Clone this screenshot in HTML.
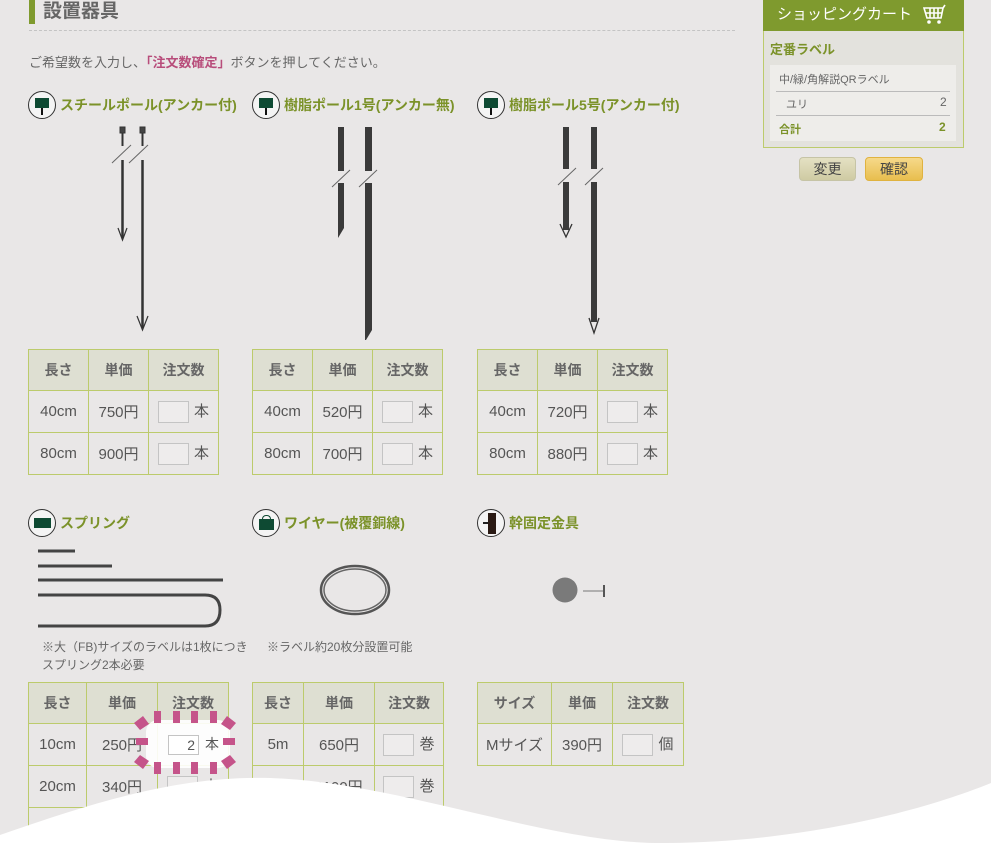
<!DOCTYPE html>
<html><head><meta charset="utf-8"><style>
*{margin:0;padding:0;box-sizing:border-box}
html,body{width:991px;height:845px;overflow:hidden;background:#e9e7e7}
body{position:relative;font-family:"Liberation Sans","Noto Sans CJK JP",sans-serif;color:#555}
.abs{position:absolute}
h1{position:absolute;left:29px;top:0;height:24px;border-left:6px solid #7f9a2e;padding-left:8px;font-size:19px;font-weight:bold;color:#666;line-height:24px}
.rule{position:absolute;left:29px;top:30px;width:706px;border-top:1px dashed #c4c4c4}
.lead{position:absolute;left:29px;top:52px;font-size:13px;color:#666}
.lead b{color:#b84d7b}
.ttl{position:absolute;font-size:14px;font-weight:bold;color:#7b9229;line-height:28px;white-space:nowrap}
.ttl .ic{display:inline-block;width:28px;height:28px;border:1.5px solid #333;border-radius:50%;vertical-align:top;margin-right:4px;position:relative;background:#f4f4f4}
table{position:absolute;border-collapse:collapse;table-layout:fixed}
td,th{border:1.5px solid #bccb6c;text-align:center;font-size:15px;color:#555;height:42px;padding:0}
th{background:#dedfd2;font-weight:bold;color:#666;height:41px;font-size:14px}
.in{display:inline-block;width:31px;height:22px;border:1px solid #c4c4c4;background:#eeecec;vertical-align:middle;margin-right:5px}
.note{position:absolute;font-size:12px;color:#666;line-height:18px}
</style></head><body>
<h1>設置器具</h1>
<div class="rule"></div>
<div class="lead">ご希望数を入力し、<b>「注文数確定」</b>ボタンを押してください。</div>

<div class="ttl" style="left:28px;top:91px"><span class="ic"><i class="abs" style="left:6px;top:6px;width:14px;height:10px;background:#0e4a33"></i><i class="abs" style="left:12px;top:16px;width:2px;height:7px;background:#111"></i></span>スチールポール(アンカー付)</div>
<div class="ttl" style="left:252px;top:91px"><span class="ic"><i class="abs" style="left:6px;top:6px;width:14px;height:10px;background:#0e4a33"></i><i class="abs" style="left:12px;top:16px;width:2px;height:7px;background:#111"></i></span>樹脂ポール1号(アンカー無)</div>
<div class="ttl" style="left:477px;top:91px"><span class="ic"><i class="abs" style="left:6px;top:6px;width:14px;height:10px;background:#0e4a33"></i><i class="abs" style="left:12px;top:16px;width:2px;height:7px;background:#111"></i></span>樹脂ポール5号(アンカー付)</div>

<svg class="abs" style="left:0;top:0" width="991" height="845">
<g stroke="#333" fill="none">
<rect x="120" y="127" width="5" height="6" fill="#444"/><line x1="122.5" y1="133" x2="122.5" y2="146" stroke-width="2"/>
<line x1="122.5" y1="160" x2="122.5" y2="238" stroke-width="2.5"/>
<path d="M118 228 L122.5 240 L127 228" stroke-width="1.2"/>
<rect x="140" y="127" width="5" height="6" fill="#444"/><line x1="142.5" y1="133" x2="142.5" y2="146" stroke-width="2"/>
<line x1="142.5" y1="160" x2="142.5" y2="328" stroke-width="2.5"/>
<path d="M137 316 L142.5 330 L148 316" stroke-width="1.2"/>
<line x1="112" y1="163" x2="131" y2="145" stroke="#666"/><line x1="129" y1="163" x2="148" y2="145" stroke="#666"/>
<path d="M338 127 h6 v44 h-6z M338 183 h6 v45 l-6 10z" fill="#3a3a3a" stroke="none"/>
<path d="M365 127 h7 v44 h-7z M365 183 h7 v147 l-6 10 h-1z" fill="#3a3a3a" stroke="none"/>
<line x1="332" y1="187" x2="350" y2="170" stroke="#666"/><line x1="359" y1="187" x2="377" y2="170" stroke="#666"/>
<path d="M563 127 h6 v42 h-6z M563 182 h6 v48 h-6z" fill="#3a3a3a" stroke="none"/>
<path d="M560 224 L566 237 L572 224" stroke-width="1.3"/>
<path d="M591 127 h6 v42 h-6z M591 182 h6 v140 h-6z" fill="#3a3a3a" stroke="none"/>
<path d="M589 318 L594 333 L599 318" stroke-width="1.3"/>
<line x1="558" y1="185" x2="576" y2="168" stroke="#666"/><line x1="585" y1="185" x2="603" y2="168" stroke="#666"/>
<line x1="38" y1="551" x2="75" y2="551" stroke="#444" stroke-width="3"/>
<line x1="38" y1="566" x2="112" y2="566" stroke="#444" stroke-width="3"/>
<line x1="38" y1="580" x2="223" y2="580" stroke="#444" stroke-width="3"/>
<path d="M38 595 H205 Q220 595 220 610 Q220 626 205 626 H38" stroke="#444" stroke-width="3"/>
<ellipse cx="355" cy="590" rx="34" ry="24" stroke="#555" stroke-width="2.5"/>
<ellipse cx="355" cy="590" rx="31" ry="21" stroke="#666" stroke-width="1.5"/>
<circle cx="565" cy="590" r="12.5" fill="#7a7a7a" stroke="none"/>
<line x1="583" y1="591" x2="603" y2="591" stroke="#777" stroke-width="1"/><line x1="604" y1="585" x2="604" y2="597" stroke="#555" stroke-width="2"/>
</g>
</svg>

<table style="left:28px;top:349px;width:190px"><col width="60"><col width="60"><col width="70">
<tr><th>長さ</th><th>単価</th><th>注文数</th></tr>
<tr><td>40cm</td><td>750円</td><td><span class="in"></span>本</td></tr>
<tr><td>80cm</td><td>900円</td><td><span class="in"></span>本</td></tr></table>
<table style="left:252px;top:349px;width:190px"><col width="60"><col width="60"><col width="70">
<tr><th>長さ</th><th>単価</th><th>注文数</th></tr>
<tr><td>40cm</td><td>520円</td><td><span class="in"></span>本</td></tr>
<tr><td>80cm</td><td>700円</td><td><span class="in"></span>本</td></tr></table>
<table style="left:477px;top:349px;width:190px"><col width="60"><col width="60"><col width="70">
<tr><th>長さ</th><th>単価</th><th>注文数</th></tr>
<tr><td>40cm</td><td>720円</td><td><span class="in"></span>本</td></tr>
<tr><td>80cm</td><td>880円</td><td><span class="in"></span>本</td></tr></table>

<div class="ttl" style="left:28px;top:509px"><span class="ic"><i class="abs" style="left:5px;top:8px;width:17px;height:10px;background:#0e4a33"></i></span>スプリング</div>
<div class="ttl" style="left:252px;top:509px"><span class="ic"><i class="abs" style="left:6px;top:9px;width:15px;height:11px;background:#0e4a33"></i><i class="abs" style="left:9px;top:5px;width:9px;height:5px;border:1.5px solid #0e4a33;border-bottom:none;border-radius:4px 4px 0 0"></i></span>ワイヤー(被覆銅線)</div>
<div class="ttl" style="left:477px;top:509px"><span class="ic"><i class="abs" style="left:10px;top:3px;width:8px;height:21px;background:#2a1a14"></i><i class="abs" style="left:5px;top:12px;width:5px;height:2px;background:#222"></i></span>幹固定金具</div>

<div class="note" style="left:42px;top:638px">※大（FB)サイズのラベルは1枚につき<br>スプリング2本必要</div>
<div class="note" style="left:267px;top:638px">※ラベル約20枚分設置可能</div>

<table style="left:28px;top:682px;width:200px"><col width="58"><col width="71"><col width="71">
<tr><th>長さ</th><th>単価</th><th>注文数</th></tr>
<tr><td>10cm</td><td>250円</td><td></td></tr>
<tr><td>20cm</td><td>340円</td><td><span class="in"></span>本</td></tr>
<tr><td>&nbsp;</td><td></td><td></td></tr></table>
<table style="left:252px;top:682px;width:191px"><col width="51"><col width="71"><col width="69">
<tr><th>長さ</th><th>単価</th><th>注文数</th></tr>
<tr><td>5m</td><td>650円</td><td><span class="in"></span>巻</td></tr>
<tr><td>10m</td><td>1100円</td><td><span class="in"></span>巻</td></tr></table>
<table style="left:477px;top:682px;width:206px"><col width="74"><col width="61"><col width="71">
<tr><th>サイズ</th><th>単価</th><th>注文数</th></tr>
<tr><td>Mサイズ</td><td>390円</td><td><span class="in"></span>個</td></tr></table>

<div class="abs" style="left:146px;top:720px;width:84px;height:48px;background:#fff;border-radius:12px;opacity:.9"></div>
<div class="abs" style="left:168px;top:735px;width:31px;height:20px;border:1px solid #c4c4c4;background:#fff;text-align:right;padding-right:3px;font-size:14px;line-height:18px">2</div>
<div class="abs" style="left:205px;top:735px;font-size:14px;line-height:18px">本</div>
<svg class="abs" style="left:130px;top:708px" width="110" height="70">
<g fill="#c5548a">
<rect x="24" y="3" width="7" height="12"/><rect x="43" y="3" width="7" height="12"/><rect x="61" y="3" width="7" height="12"/><rect x="80" y="3" width="7" height="12"/>
<rect x="24" y="54" width="7" height="12"/><rect x="43" y="54" width="7" height="12"/><rect x="61" y="54" width="7" height="12"/><rect x="80" y="54" width="7" height="12"/>
<rect x="6" y="30" width="12" height="7"/><rect x="93" y="30" width="12" height="7"/>
<path d="M4 15 l9 -7 l6 8 l-9 6z M106 15 l-9 -7 l-6 8 l9 6z M4 54 l9 7 l6 -8 l-9 -6z M106 54 l-9 7 l-6 -8 l9 -6z"/>
</g></svg>

<div class="abs" style="left:763px;top:0;width:201px;height:148px;border:1.5px solid #bccb6c;background:#e3e2dd"></div>
<div class="abs" style="left:763px;top:0;width:201px;height:31px;background:#7f9a2e;color:#fff;font-size:15px;line-height:29px;padding-left:14px">ショッピングカート
<svg class="abs" style="left:160px;top:4px" width="26" height="22"><g stroke="#fff" fill="none" stroke-width="1.6"><path d="M1 4 H20 L18 14 H4 Z M22 1 L20 4"/><path d="M7 4 V14 M11 4 V14 M15 4 V14 M2 9 H19"/></g><circle cx="6" cy="18" r="1.8" fill="#fff"/><circle cx="16" cy="18" r="1.8" fill="#fff"/></svg></div>
<div class="abs" style="left:770px;top:39px;font-size:13px;font-weight:bold;color:#7b9229">定番ラベル</div>
<div class="abs" style="left:770px;top:65px;width:186px;height:76px;background:#eeedea"></div>
<div class="abs" style="left:779px;top:71px;font-size:11px;color:#666">中/緑/角解説QRラベル</div>
<div class="abs" style="left:776px;top:91px;width:174px;border-top:1px solid #bbb"></div>
<div class="abs" style="left:786px;top:96px;font-size:11px;color:#666">ユリ</div>
<div class="abs" style="left:940px;top:95px;font-size:12px;color:#666">2</div>
<div class="abs" style="left:776px;top:115px;width:174px;border-top:1px solid #bbb"></div>
<div class="abs" style="left:779px;top:121px;font-size:11px;font-weight:bold;color:#7b9229">合計</div>
<div class="abs" style="left:939px;top:120px;font-size:12px;font-weight:bold;color:#7b9229">2</div>
<div class="abs" style="left:799px;top:157px;width:57px;height:24px;border:1px solid #c6c4a6;border-radius:4px;background:linear-gradient(#e4e1c3,#cfcba3);text-align:center;font-size:14px;line-height:22px;color:#444">変更</div>
<div class="abs" style="left:865px;top:157px;width:58px;height:24px;border:1px solid #e0b340;border-radius:4px;background:linear-gradient(#f6d98a,#e8be4e);text-align:center;font-size:14px;line-height:22px;color:#444">確認</div>

<svg class="abs" style="left:0;top:0" width="991" height="845"><path d="M0 835 C100 800 180 776 270 778 C400 782 550 845 667 843 C800 842 920 812 991 783 L991 845 L0 845 Z" fill="#fff"/></svg>
</body></html>
